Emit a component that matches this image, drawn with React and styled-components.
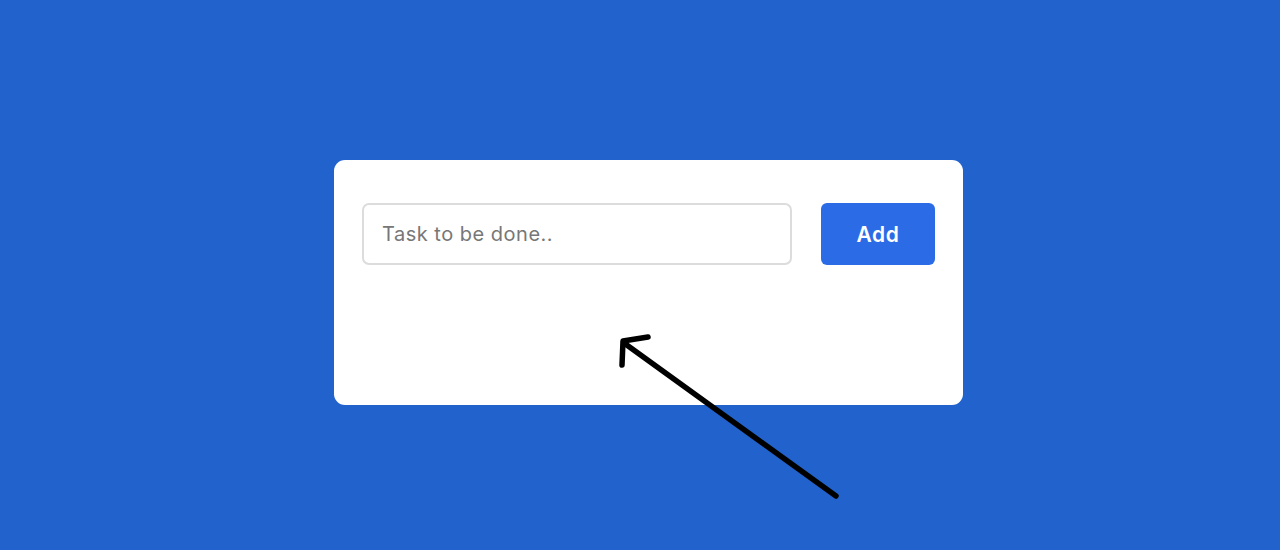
import React from "react";
import styled, { createGlobalStyle } from "styled-components";

const Global = createGlobalStyle`
  html, body { margin: 0; padding: 0; }
  body {
    background: #2262cc;
    font-family: "Inter", "Noto Sans", sans-serif;
    height: 550px;
    overflow: hidden;
  }
`;

const Page = styled.div`
  position: relative;
  height: 550px;
  padding-top: 160px;
  padding-left: 17px;
  box-sizing: border-box;
  display: flex;
  justify-content: center;
  align-items: flex-start;
`;

const Card = styled.div`
  width: 629px;
  height: 245px;
  box-sizing: border-box;
  background: #ffffff;
  border-radius: 11px;
  padding: 43px 28px 0;
`;

const Row = styled.form`
  display: flex;
  gap: 29px;
  margin: 0;
`;

const Input = styled.input`
  width: 430px;
  height: 62px;
  box-sizing: border-box;
  border: 2px solid #dcdcdc;
  border-radius: 7px;
  padding: 0 18px;
  font-family: inherit;
  font-size: 20px;
  letter-spacing: 0.5px;
  color: #333;
  outline: none;
  &::placeholder { color: #777777; }
`;

const Button = styled.button`
  width: 114px;
  height: 62px;
  border: none;
  border-radius: 6px;
  background: #2c6be6;
  color: #ffffff;
  font-family: inherit;
  font-size: 21px;
  font-weight: 600;
  letter-spacing: 0.6px;
  cursor: pointer;
`;

const Arrow = styled.svg`
  position: absolute;
  left: 0;
  top: 0;
  pointer-events: none;
`;

export default function App() {
  return (
    <>
      <Global />
      <Page>
        <Card>
          <Row onSubmit={(e) => e.preventDefault()}>
            <Input placeholder="Task to be done.." />
            <Button type="submit">Add</Button>
          </Row>
        </Card>
        <Arrow width="1280" height="550" viewBox="0 0 1280 550">
          <g stroke="#000" strokeWidth="5.5" strokeLinecap="round" fill="none">
            <line x1="836" y1="496" x2="624" y2="343" />
            <polyline points="648,337 623,341 622,365" strokeLinejoin="round" />
          </g>
        </Arrow>
      </Page>
    </>
  );
}
